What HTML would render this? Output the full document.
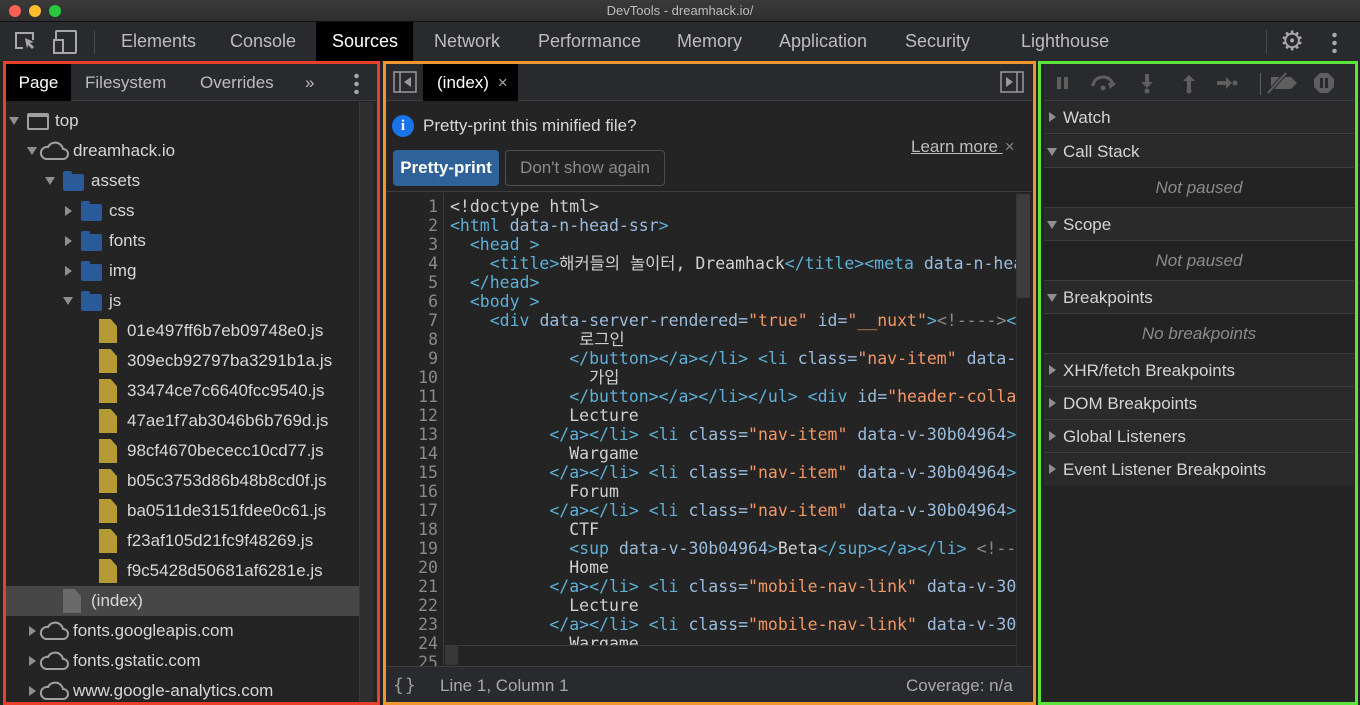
<!DOCTYPE html>
<html><head><style>
*{box-sizing:border-box;margin:0;padding:0}
body{width:1360px;height:705px;background:#242424;font-family:"Liberation Sans",sans-serif;position:relative;overflow:hidden;color:#d4d4d4}
.a{position:absolute}
.title{left:0;top:0;width:1360px;height:22px;background:linear-gradient(#3a3a3a,#2e2e2e);border-bottom:1px solid #111;text-align:center;font-size:13px;line-height:22px;color:#bdbdbd}
.dot{width:12px;height:12px;border-radius:50%;top:5px}
.tabs{left:0;top:22px;width:1360px;height:39px;background:#292a2d}
.tab{top:22px;height:39px;line-height:39px;font-size:18px;color:#bdbdbd}
.box{border:3px solid}
.tree{font-size:17px;color:#d7d7d7;white-space:nowrap}
.row{position:absolute;left:0;height:30px;line-height:30px}
.tri{position:absolute;width:0;height:0}
.dn{border-left:5px solid transparent;border-right:5px solid transparent;border-top:8px solid #8f8f8f}
.rt{border-top:5px solid transparent;border-bottom:5px solid transparent;border-left:7px solid #8f8f8f}
.fold{position:absolute;width:21px;height:17px;background:#2a5a9a;border-radius:2px}
.fold:before{content:"";position:absolute;left:0;top:-3px;width:9px;height:4px;background:#2a5a9a;border-radius:2px 2px 0 0}
.js{position:absolute;width:18px;height:24px;background:#b59a35;clip-path:polygon(0 0,65% 0,100% 30%,100% 100%,0 100%)}
.code{font-family:"DejaVu Sans Mono","Liberation Mono","Noto Sans CJK KR",monospace;font-size:16.5px;line-height:19px;white-space:pre;color:#cfd0d0}
.t{color:#5db0d7}.n{color:#9bbbdc}.v{color:#f29766}.c{color:#898989}
.ln{text-align:right;color:#8a8a8a}
.sec{position:absolute;left:1044px;width:310px;height:33px;background:#2a2a2a;border-bottom:1px solid #3d3d3d;font-size:17px;line-height:33px;padding-left:19px;color:#d4d4d4}
.emp{position:absolute;left:1044px;width:310px;height:40px;background:#232323;border-bottom:1px solid #3d3d3d;font-size:17px;line-height:40px;text-align:center;font-style:italic;color:#8a8a8a}
.sec .tri{left:5px}
</style></head><body>
<div class="a title">DevTools - dreamhack.io/</div>
<div class="a dot" style="left:9px;background:#fe5f57"></div>
<div class="a dot" style="left:29px;background:#febc2e"></div>
<div class="a dot" style="left:49px;background:#28c840"></div>
<div class="a tabs"></div>
<svg class="a" style="left:12px;top:28px" width="70" height="28" viewBox="0 0 70 28" fill="none" stroke="#a8a8a8" stroke-width="2"><path d="M11 20H4V5h17v7"/><path d="M13 10l9 4-4 1 4 4-2 2-4-4-1 4z" fill="#a8a8a8" stroke="none"/><rect x="44" y="3" width="20" height="22" rx="1"/><rect x="42" y="12" width="9" height="13" fill="#292a2d"/></svg>
<div class="a" style="left:94px;top:30px;width:1px;height:24px;background:#4a4a4a"></div>
<div class="a tab" style="left:121px">Elements</div>
<div class="a tab" style="left:230px">Console</div>
<div class="a" style="left:316px;top:22px;width:97px;height:39px;background:#000"></div>
<div class="a tab" style="left:332px;color:#fff">Sources</div>
<div class="a tab" style="left:434px">Network</div>
<div class="a tab" style="left:538px">Performance</div>
<div class="a tab" style="left:677px">Memory</div>
<div class="a tab" style="left:779px">Application</div>
<div class="a tab" style="left:905px">Security</div>
<div class="a tab" style="left:1021px">Lighthouse</div>
<div class="a" style="left:1266px;top:30px;width:1px;height:24px;background:#4a4a4a"></div>
<div class="a" style="left:1280px;top:27px;font-size:27px;color:#a8a8a8;line-height:28px">⚙</div>
<div class="a" style="left:1332px;top:31px;width:5px;height:22px;background:radial-gradient(circle,#a8a8a8 2px,transparent 2.5px) 0 0/5px 8px"></div>

<!-- left panel -->
<div class="a" style="left:6px;top:64px;width:370px;height:37px;background:#292a2d;border-bottom:1px solid #3d3d3d"></div>
<div class="a" style="left:6px;top:64px;width:65px;height:37px;background:#000;color:#fff;font-size:17px;line-height:37px;text-align:center">Page</div>
<div class="a" style="left:85px;top:64px;font-size:17px;line-height:37px;color:#bdbdbd">Filesystem</div>
<div class="a" style="left:200px;top:64px;font-size:17px;line-height:37px;color:#bdbdbd">Overrides</div>
<div class="a" style="left:305px;top:64px;font-size:17px;line-height:37px;color:#bdbdbd">»</div>
<div class="a" style="left:354px;top:72px;width:5px;height:22px;background:radial-gradient(circle,#a8a8a8 2px,transparent 2.5px) 0 0/5px 8px"></div>
<div class="a" style="left:359px;top:102px;width:14px;height:600px;background:#2e2e2e;border-left:1px solid #3a3a3a"></div>
<div class="a tree" style="left:6px;top:106px;width:353px;height:596px;overflow:hidden">
 <div class="row" style="top:0;width:353px"><i class="tri dn" style="left:3px;top:11px"></i><span class="a" style="left:21px;top:7px;width:22px;height:17px;border:2px solid #a0a0a0;border-top-width:4px;border-radius:2px"></span><span class="a" style="left:49px">top</span></div>
 <div class="row" style="top:30px;width:353px"><i class="tri dn" style="left:21px;top:11px"></i><svg class="a" style="left:33px;top:5px" width="30" height="20" viewBox="0 0 30 20" fill="none" stroke="#a0a0a0" stroke-width="2"><path d="M7 18h17a5 5 0 0 0 0-10 8 8 0 0 0-15-2 6 6 0 0 0-2 12z"/></svg><span class="a" style="left:67px">dreamhack.io</span></div>
 <div class="row" style="top:60px"><i class="tri dn" style="left:39px;top:11px"></i><i class="fold" style="left:57px;top:8px"></i><span class="a" style="left:85px">assets</span></div>
 <div class="row" style="top:90px"><i class="tri rt" style="left:59px;top:10px"></i><i class="fold" style="left:75px;top:8px"></i><span class="a" style="left:103px">css</span></div>
 <div class="row" style="top:120px"><i class="tri rt" style="left:59px;top:10px"></i><i class="fold" style="left:75px;top:8px"></i><span class="a" style="left:103px">fonts</span></div>
 <div class="row" style="top:150px"><i class="tri rt" style="left:59px;top:10px"></i><i class="fold" style="left:75px;top:8px"></i><span class="a" style="left:103px">img</span></div>
 <div class="row" style="top:180px"><i class="tri dn" style="left:57px;top:11px"></i><i class="fold" style="left:75px;top:8px"></i><span class="a" style="left:103px">js</span></div>
 <div class="row" style="top:210px"><i class="js" style="left:93px;top:3px"></i><span class="a" style="left:121px">01e497ff6b7eb09748e0.js</span></div>
 <div class="row" style="top:240px"><i class="js" style="left:93px;top:3px"></i><span class="a" style="left:121px">309ecb92797ba3291b1a.js</span></div>
 <div class="row" style="top:270px"><i class="js" style="left:93px;top:3px"></i><span class="a" style="left:121px">33474ce7c6640fcc9540.js</span></div>
 <div class="row" style="top:300px"><i class="js" style="left:93px;top:3px"></i><span class="a" style="left:121px">47ae1f7ab3046b6b769d.js</span></div>
 <div class="row" style="top:330px"><i class="js" style="left:93px;top:3px"></i><span class="a" style="left:121px">98cf4670bececc10cd77.js</span></div>
 <div class="row" style="top:360px"><i class="js" style="left:93px;top:3px"></i><span class="a" style="left:121px">b05c3753d86b48b8cd0f.js</span></div>
 <div class="row" style="top:390px"><i class="js" style="left:93px;top:3px"></i><span class="a" style="left:121px">ba0511de3151fdee0c61.js</span></div>
 <div class="row" style="top:420px"><i class="js" style="left:93px;top:3px"></i><span class="a" style="left:121px">f23af105d21fc9f48269.js</span></div>
 <div class="row" style="top:450px"><i class="js" style="left:93px;top:3px"></i><span class="a" style="left:121px">f9c5428d50681af6281e.js</span></div>
 <div class="row" style="top:480px;width:353px;background:#474747"><i class="js" style="left:57px;top:3px;background:#6a6a6a"></i><span class="a" style="left:85px">(index)</span></div>
 <div class="row" style="top:510px"><i class="tri rt" style="left:23px;top:10px"></i><svg class="a" style="left:33px;top:5px" width="30" height="20" viewBox="0 0 30 20" fill="none" stroke="#a0a0a0" stroke-width="2"><path d="M7 18h17a5 5 0 0 0 0-10 8 8 0 0 0-15-2 6 6 0 0 0-2 12z"/></svg><span class="a" style="left:67px">fonts.googleapis.com</span></div>
 <div class="row" style="top:540px"><i class="tri rt" style="left:23px;top:10px"></i><svg class="a" style="left:33px;top:5px" width="30" height="20" viewBox="0 0 30 20" fill="none" stroke="#a0a0a0" stroke-width="2"><path d="M7 18h17a5 5 0 0 0 0-10 8 8 0 0 0-15-2 6 6 0 0 0-2 12z"/></svg><span class="a" style="left:67px">fonts.gstatic.com</span></div>
 <div class="row" style="top:570px"><i class="tri rt" style="left:23px;top:10px"></i><svg class="a" style="left:33px;top:5px" width="30" height="20" viewBox="0 0 30 20" fill="none" stroke="#a0a0a0" stroke-width="2"><path d="M7 18h17a5 5 0 0 0 0-10 8 8 0 0 0-15-2 6 6 0 0 0-2 12z"/></svg><span class="a" style="left:67px">www.google-analytics.com</span></div>
</div>
<div class="a box" style="left:3px;top:61px;width:377px;height:644px;border-color:#e8402b"></div>

<!-- middle -->
<div class="a" style="left:386px;top:64px;width:646px;height:37px;background:#292a2d;border-bottom:1px solid #3d3d3d"></div>
<svg class="a" style="left:393px;top:71px" width="24" height="22" viewBox="0 0 24 22" fill="none" stroke="#9a9a9a" stroke-width="1.5"><rect x="1" y="1" width="22" height="20"/><path d="M7 1v20"/><path d="M18 6v10l-7-5z" fill="#9a9a9a" stroke="none"/></svg>
<div class="a" style="left:423px;top:64px;width:95px;height:37px;background:#000;color:#fff;font-size:17px;line-height:37px;padding-left:14px">(index) <span style="color:#aaa;margin-left:4px">×</span></div>
<svg class="a" style="left:1000px;top:71px" width="24" height="22" viewBox="0 0 24 22" fill="none" stroke="#9a9a9a" stroke-width="1.5"><rect x="1" y="1" width="22" height="20"/><path d="M17 1v20"/><path d="M6 6v10l7-5z" fill="#9a9a9a" stroke="none"/></svg>
<div class="a" style="left:386px;top:102px;width:646px;height:90px;background:#242424;border-bottom:1px solid #3d3d3d"></div>
<div class="a" style="left:392px;top:115px;width:22px;height:22px;border-radius:50%;background:#1a73e8;color:#fff;font-size:15px;font-weight:bold;text-align:center;line-height:22px;font-family:'Liberation Serif',serif">i</div>
<div class="a" style="left:423px;top:115px;font-size:17px;line-height:22px;color:#d7d7d7">Pretty-print this minified file?</div>
<div class="a" style="left:911px;top:136px;font-size:17px;line-height:22px;color:#bdbdbd;text-decoration:underline">Learn more <span style="text-decoration:none;color:#888;display:inline-block;margin-left:2px">×</span></div>
<div class="a" style="left:393px;top:150px;width:106px;height:36px;background:#2e6298;border-radius:4px;color:#fff;font-size:17px;font-weight:bold;line-height:36px;text-align:center">Pretty-print</div>
<div class="a" style="left:505px;top:150px;width:160px;height:36px;border:1px solid #4e4e4e;border-radius:4px;color:#8a8a8a;font-size:17px;line-height:34px;text-align:center">Don't show again</div>
<div class="a" style="left:386px;top:193px;width:58px;height:473px;background:#242424;border-right:1px solid #3a3a3a"></div>
<div class="a code ln" style="left:386px;top:197px;width:52px;height:469px;overflow:hidden">1
2
3
4
5
6
7
8
9
10
11
12
13
14
15
16
17
18
19
20
21
22
23
24
25</div>
<div class="a code" style="left:450px;top:197px;width:566px;height:448px;overflow:hidden">&lt;!doctype html&gt;
<span class="t">&lt;html</span> <span class="n">data-n-head-ssr</span><span class="t">&gt;</span>
  <span class="t">&lt;head &gt;</span>
    <span class="t">&lt;title&gt;</span>해커들의 놀이터, Dreamhack<span class="t">&lt;/title&gt;&lt;meta</span> <span class="n">data-n-head</span>
  <span class="t">&lt;/head&gt;</span>
  <span class="t">&lt;body &gt;</span>
    <span class="t">&lt;div</span> <span class="n">data-server-rendered=</span><span class="v">"true"</span> <span class="n">id=</span><span class="v">"__nuxt"</span><span class="t">&gt;</span><span class="c">&lt;!----&gt;</span><span class="t">&lt;</span>
             로그인
            <span class="t">&lt;/button&gt;&lt;/a&gt;&lt;/li&gt;</span> <span class="t">&lt;li</span> <span class="n">class=</span><span class="v">"nav-item"</span> <span class="n">data-</span>
              가입
            <span class="t">&lt;/button&gt;&lt;/a&gt;&lt;/li&gt;&lt;/ul&gt;</span> <span class="t">&lt;div</span> <span class="n">id=</span><span class="v">"header-colla</span>
            Lecture
          <span class="t">&lt;/a&gt;&lt;/li&gt;</span> <span class="t">&lt;li</span> <span class="n">class=</span><span class="v">"nav-item"</span> <span class="n">data-v-30b04964</span><span class="t">&gt;</span>
            Wargame
          <span class="t">&lt;/a&gt;&lt;/li&gt;</span> <span class="t">&lt;li</span> <span class="n">class=</span><span class="v">"nav-item"</span> <span class="n">data-v-30b04964</span><span class="t">&gt;</span>
            Forum
          <span class="t">&lt;/a&gt;&lt;/li&gt;</span> <span class="t">&lt;li</span> <span class="n">class=</span><span class="v">"nav-item"</span> <span class="n">data-v-30b04964</span><span class="t">&gt;</span>
            CTF
            <span class="t">&lt;sup</span> <span class="n">data-v-30b04964</span><span class="t">&gt;</span>Beta<span class="t">&lt;/sup&gt;&lt;/a&gt;&lt;/li&gt;</span> <span class="c">&lt;!--</span>
            Home
          <span class="t">&lt;/a&gt;&lt;/li&gt;</span> <span class="t">&lt;li</span> <span class="n">class=</span><span class="v">"mobile-nav-link"</span> <span class="n">data-v-30</span>
            Lecture
          <span class="t">&lt;/a&gt;&lt;/li&gt;</span> <span class="t">&lt;li</span> <span class="n">class=</span><span class="v">"mobile-nav-link"</span> <span class="n">data-v-30</span>
            Wargame</div>
<div class="a" style="left:445px;top:645px;width:572px;height:21px;background:#242424;border-top:1px solid #3a3a3a"></div>
<div class="a" style="left:445px;top:646px;width:13px;height:19px;background:#383838;border-radius:2px"></div>
<div class="a" style="left:1016px;top:193px;width:16px;height:473px;background:#242424;border-left:1px solid #333"></div>
<div class="a" style="left:1017px;top:194px;width:13px;height:104px;background:#3c3c3c;border-radius:2px"></div>
<div class="a" style="left:386px;top:666px;width:646px;height:36px;background:#292a2d;border-top:1px solid #3d3d3d"></div>
<div class="a" style="left:393px;top:675px;font-size:18px;color:#9a9a9a;font-family:'DejaVu Sans Mono',monospace;letter-spacing:1px">{}</div>
<div class="a" style="left:440px;top:676px;font-size:17px;color:#aaa">Line 1, Column 1</div>
<div class="a" style="left:906px;top:676px;font-size:17px;color:#aaa">Coverage: n/a</div>
<div class="a box" style="left:383px;top:61px;width:653px;height:644px;border-color:#f0962e"></div>

<!-- right -->
<div class="a" style="left:1044px;top:64px;width:310px;height:37px;background:#292a2d;border-bottom:1px solid #3d3d3d"></div>
<svg class="a" style="left:1050px;top:70px" width="300" height="26" viewBox="0 0 300 26" fill="#5f5f5f"><rect x="7" y="7" width="4" height="12"/><rect x="14" y="7" width="4" height="12"/><path d="M43 16a10 9 0 0 1 20 0" fill="none" stroke="#5f5f5f" stroke-width="3"/><path d="M60 19l6-6h-8z"/><circle cx="53" cy="18" r="2.5"/><path d="M95 4h4v8h4l-6 6-6-6h4z"/><circle cx="97" cy="21" r="2.5"/><path d="M137 19h4v-8h4l-6-6-6 6h4z"/><circle cx="139" cy="21" r="2.5"/><path d="M167 11h9V7l6 6-6 6v-4h-9z"/><circle cx="185" cy="13" r="2.5"/><rect x="210" y="3" width="1" height="22"/><path d="M221 7h20l6 6-6 6h-20z"/><path d="M218 23l18-20" stroke="#292a2d" stroke-width="4"/><path d="M218 23l18-20" stroke="#5f5f5f" stroke-width="2"/><path d="M270 3h8l6 6v8l-6 6h-8l-6-6V9z"/><rect x="270" y="8" width="3" height="10" fill="#292a2d"/><rect x="275" y="8" width="3" height="10" fill="#292a2d"/></svg>
<div class="sec" style="top:101px"><i class="tri rt" style="top:11px"></i>Watch</div>
<div class="sec" style="top:135px"><i class="tri dn" style="top:13px;left:3px"></i>Call Stack</div>
<div class="emp" style="top:168px">Not paused</div>
<div class="sec" style="top:208px"><i class="tri dn" style="top:13px;left:3px"></i>Scope</div>
<div class="emp" style="top:241px">Not paused</div>
<div class="sec" style="top:281px"><i class="tri dn" style="top:13px;left:3px"></i>Breakpoints</div>
<div class="emp" style="top:314px">No breakpoints</div>
<div class="sec" style="top:354px"><i class="tri rt" style="top:11px"></i>XHR/fetch Breakpoints</div>
<div class="sec" style="top:387px"><i class="tri rt" style="top:11px"></i>DOM Breakpoints</div>
<div class="sec" style="top:420px"><i class="tri rt" style="top:11px"></i>Global Listeners</div>
<div class="sec" style="top:453px;border-bottom:none"><i class="tri rt" style="top:11px"></i>Event Listener Breakpoints</div>
<div class="a box" style="left:1038px;top:61px;width:320px;height:644px;border-color:#5de43c"></div>
</body></html>
